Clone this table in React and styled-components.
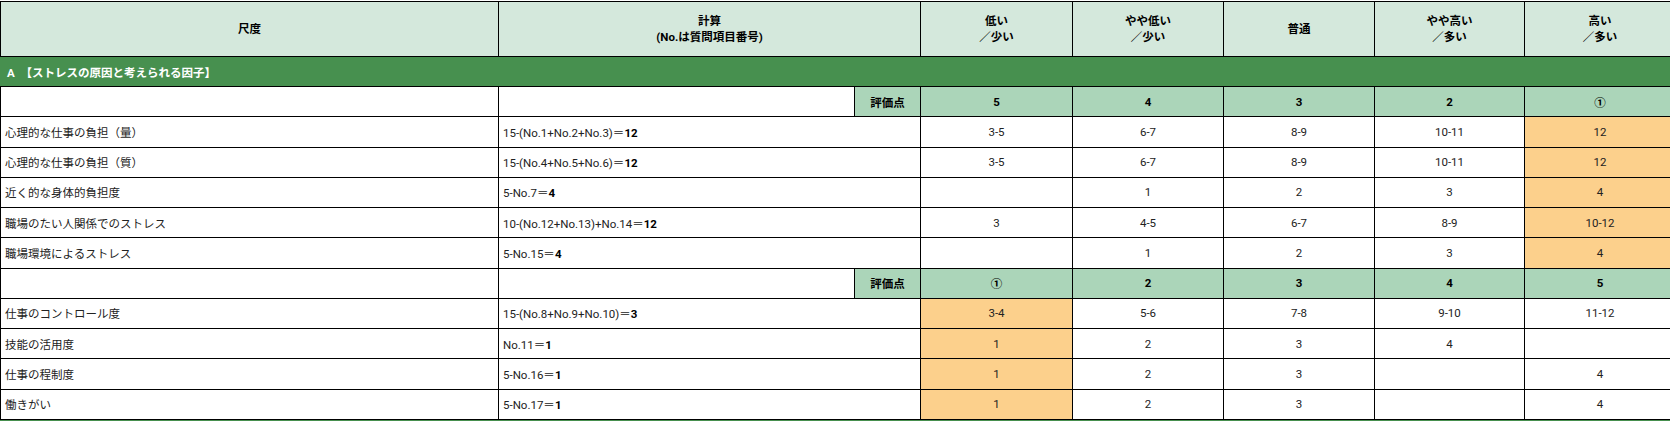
import React from "react";
import styled, { createGlobalStyle } from "styled-components";

const GlobalStyle = createGlobalStyle`
  html, body {
    margin: 0;
    padding: 0;
    background: #ffffff;
    overflow: hidden;
  }
  body {
    padding-top: 1px;
    font-family: Roboto, "Noto Sans CJK JP", "Noto Sans", sans-serif;
  }
`;

const tones = {
  white: "#ffffff",
  score: "#abd5b9",
  hit: "#fcd08c",
};

const headers = [
  ["低い", "／少い"],
  ["やや低い", "／少い"],
  ["普通"],
  ["やや高い", "／多い"],
  ["高い", "／多い"],
];

// 上段（ストレス要因）: 高いほど①
const groupA = {
  scores: ["5", "4", "3", "2", "①"],
  hitCol: 4,
  rows: [
    { name: "心理的な仕事の負担（量）", calc: "15-(No.1+No.2+No.3)＝", val: "12", cells: ["3-5", "6-7", "8-9", "10-11", "12"] },
    { name: "心理的な仕事の負担（質）", calc: "15-(No.4+No.5+No.6)＝", val: "12", cells: ["3-5", "6-7", "8-9", "10-11", "12"] },
    { name: "近く的な身体的負担度", calc: "5-No.7＝", val: "4", cells: ["", "1", "2", "3", "4"] },
    { name: "職場のたい人関係でのストレス", calc: "10-(No.12+No.13)+No.14＝", val: "12", cells: ["3", "4-5", "6-7", "8-9", "10-12"] },
    { name: "職場環境によるストレス", calc: "5-No.15＝", val: "4", cells: ["", "1", "2", "3", "4"] },
  ],
};

// 下段: 低いほど①
const groupB = {
  scores: ["①", "2", "3", "4", "5"],
  hitCol: 0,
  rows: [
    { name: "仕事のコントロール度", calc: "15-(No.8+No.9+No.10)＝", val: "3", cells: ["3-4", "5-6", "7-8", "9-10", "11-12"] },
    { name: "技能の活用度", calc: "No.11＝", val: "1", cells: ["1", "2", "3", "4", ""] },
    { name: "仕事の程制度", calc: "5-No.16＝", val: "1", cells: ["1", "2", "3", "", "4"] },
    { name: "働きがい", calc: "5-No.17＝", val: "1", cells: ["1", "2", "3", "", "4"] },
  ],
};

const App = () => {
  const renderGroup = (group, key) => (
    <React.Fragment key={key}>
      <Row>
        <TextCell />
        <TextCell />
        <ScoreLabel>評価点</ScoreLabel>
        {group.scores.map((s, i) => (
          <ValueCell key={i} $tone="score" $bold>
            {s}
          </ValueCell>
        ))}
      </Row>
      {group.rows.map((r) => (
        <Row key={r.name}>
          <TextCell>{r.name}</TextCell>
          <TextCell colSpan={2}>
            {r.calc}
            <b>{r.val}</b>
          </TextCell>
          {r.cells.map((c, i) => (
            <ValueCell key={i} $tone={i === group.hitCol ? "hit" : "white"}>
              {c}
            </ValueCell>
          ))}
        </Row>
      ))}
    </React.Fragment>
  );

  return (
    <>
      <GlobalStyle />
      <Table>
        <colgroup>
          <col style={{ width: 498 }} />
          <col style={{ width: 356 }} />
          <col style={{ width: 66 }} />
          <col style={{ width: 152 }} />
          <col style={{ width: 151 }} />
          <col style={{ width: 151 }} />
          <col style={{ width: 150 }} />
          <col style={{ width: 151 }} />
        </colgroup>
        <tbody>
          <HeadRow>
            <HeadCell>尺度</HeadCell>
            <HeadCell colSpan={2}>
              計算
              <br />
              (No.は質問項目番号)
            </HeadCell>
            {headers.map((h, i) => (
              <HeadCell key={i}>
                {h[0]}
                {h[1] && (
                  <>
                    <br />
                    {h[1]}
                  </>
                )}
              </HeadCell>
            ))}
          </HeadRow>
          <SectionRow>
            <SectionCell colSpan={8}>A&nbsp;&nbsp;【ストレスの原因と考えられる因子】</SectionCell>
          </SectionRow>
          {renderGroup(groupA, "a")}
          {renderGroup(groupB, "b")}
          <SectionRow>
            <SectionCell colSpan={8} />
          </SectionRow>
        </tbody>
      </Table>
    </>
  );
};

export default App;

const Table = styled.table`
  border-collapse: collapse;
  table-layout: fixed;
  width: 1675px;
  font-size: 11.5px;
  color: #222222;
`;

const HeadRow = styled.tr`
  height: 55px;
`;

const SectionRow = styled.tr`
  height: 30px;
`;

const Row = styled.tr`
  height: 30.25px;
`;

const HeadCell = styled.th`
  background: #d4e8dc;
  border: 1px solid #000000;
  color: #000000;
  font-weight: 700;
  line-height: 16px;
  text-align: center;
  vertical-align: middle;
  padding: 0 4px;
`;

const SectionCell = styled.td`
  background: #47904f;
  border: 1px solid #000000;
  border-left-color: #47904f;
  border-right-color: #47904f;
  color: #ffffff;
  font-weight: 700;
  padding: 0 6px;
  white-space: nowrap;
`;

const TextCell = styled.td`
  background: #ffffff;
  border: 1px solid #000000;
  padding: 0 4px;
  text-align: left;
  white-space: nowrap;
  overflow: hidden;

  b {
    font-weight: 700;
    color: #000000;
  }
`;

const ScoreLabel = styled.td`
  background: ${tones.score};
  border: 1px solid #000000;
  color: #000000;
  font-weight: 700;
  text-align: center;
  padding: 0;
`;

const ValueCell = styled.td`
  background: ${(p) => tones[p.$tone]};
  border: 1px solid #000000;
  color: ${(p) => (p.$bold ? "#000000" : "#222222")};
  font-weight: ${(p) => (p.$bold ? 700 : 400)};
  text-align: center;
  padding: 0 4px;
`;
